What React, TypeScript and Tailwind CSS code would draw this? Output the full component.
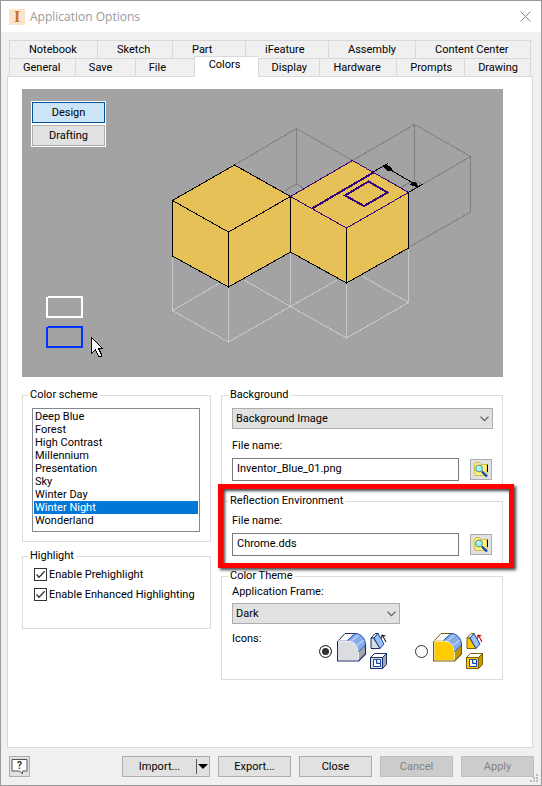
import { useState } from "react";
import type { ReactNode } from "react";

const schemes = [
  "Deep Blue",
  "Forest",
  "High Contrast",
  "Millennium",
  "Presentation",
  "Sky",
  "Winter Day",
  "Winter Night",
  "Wonderland",
];

const upperTabs = ["Notebook", "Sketch", "Part", "iFeature", "Assembly", "Content Center"];
const lowerTabs = ["General", "Save", "File", "Colors", "Display", "Hardware", "Prompts", "Drawing"];

const tabStyle = "min-w-0 border-t border-l border-[#d9d9d9] text-left whitespace-nowrap";

function Tabs() {
  return (
    <nav role="tablist" aria-label="Option pages" className="mx-2 mt-2 pr-0.5">
      <div className="grid h-[18px] grid-cols-[88fr_75fr_73fr_83fr_87fr_115fr] border-r border-[#d9d9d9]">
        {upperTabs.map((name) => (
          <button key={name} role="tab" aria-selected={false} className={`${tabStyle} pl-[19px]`}>
            {name}
          </button>
        ))}
      </div>
      <div className="grid h-[18px] grid-cols-[66fr_60fr_59fr_64fr_62fr_77fr_68fr_66fr] border-r border-[#d9d9d9]">
        {lowerTabs.map((name) =>
          name === "Colors" ? (
            <button
              key={name}
              role="tab"
              aria-selected={true}
              className={`${tabStyle} z-10 -mt-0.5 -mb-px bg-white pb-1 pl-3.5`}
            >
              {name}
            </button>
          ) : (
            <button key={name} role="tab" aria-selected={false} className={`${tabStyle} pl-[13px]`}>
              {name}
            </button>
          ),
        )}
      </div>
    </nav>
  );
}

function Scene() {
  return (
    <svg
      viewBox="22 89 481 288"
      preserveAspectRatio="xMinYMin meet"
      className="h-72 w-full"
      fill="none"
      shapeRendering="crispEdges"
      aria-hidden="true"
    >
      <g stroke="#7f7f7f">
        <path d="M234.5 165 296.5 128.5 352.5 160.5M296.5 128.5V184L285 190.5M296.5 184 304 188.5" />
        <path d="M352.5 160.5 414.5 124.5 470.5 156.5V212L408.5 247.5M414.5 124.5V180L400 188M414.5 180 421 184M470.5 156.5 408.5 192.5" />
      </g>
      <g stroke="#c8c8c8">
        <path d="M172.5 256V310.5L228.5 342 290.5 306.5 346.5 338 408.5 302.5V248" />
        <path d="M228.5 287V342M290.5 252V306M346.5 283V338M172.5 310.5 220 283M244 280 290.5 306.5 337 280M362 276 408.5 302.5" />
      </g>
      <path
        d="M172.5 200.5 234.5 165 290.5 196.5 352.5 160.5 408.5 192.5V248L346.5 283 290.5 252 228.5 287 172.5 256Z"
        fill="#e6c157"
      />
      <path
        stroke="#000"
        d="M290.5 196.5 234.5 165 172.5 200.5V256L228.5 287 290.5 252 346.5 283 408.5 248V192.5M172.5 200.5 228.5 232 290.5 196.5V252M228.5 232V287M346.5 228V283"
      />
      <path stroke="#330080" d="M290.5 196.5 352.5 160.5 408.5 192.5 346.5 228Z" />
      <path stroke="#330080" strokeWidth="2" d="M312 208.5 373.5 172.5M368.500 181.500 387.500 192.500 364 206 345 195.500Z" />
      <g stroke="#000">
        <path d="M373 172 388 163.500M409 192 423 184M383 165.500 418 186" />
        <path fill="#000" d="M384 166.500 387 165.500 391 168 391 170 387 170ZM418 186.500 416 183 413 182.500 411 184.500 415 186Z" />
      </g>
      <path stroke="#fff" strokeWidth="2" d="M48 297H82V317H47V297" />
      <path stroke="#0033ff" strokeWidth="2" d="M48 327H82V347H47V327" />
      <path
        d="M91.500 337.500V353.500L95.500 349.500 98.500 356.500H101.500V354.500L98.500 348.500H102.500Z"
        fill="#fff"
        stroke="#000"
      />
    </svg>
  );
}

function Group({ title, className, children }: { title: string; className: string; children: ReactNode }) {
  return (
    <fieldset className={`min-w-0 border border-[#dcdcdc] ${className}`}>
      <legend className="-ml-1 px-0.5 leading-[14px]">{title}</legend>
      {children}
    </fieldset>
  );
}

function Combo({ id, label, options, className }: { id: string; label?: string; options: string[]; className: string }) {
  return (
    <div className={`relative h-[21px] ${className}`}>
      <select
        id={id}
        aria-label={label}
        className="block h-full w-full appearance-none border border-[#adadad] bg-[#e1e1e1] pl-[3px]"
      >
        {options.map((o) => (
          <option key={o}>{o}</option>
        ))}
      </select>
      <svg
        viewBox="0 0 9 6"
        className="pointer-events-none absolute top-2 right-1 h-1.5 w-[9px]"
        fill="none"
        stroke="#555"
        strokeWidth="1.1"
        aria-hidden="true"
      >
        <path d="M.5.700 4.500 4.700 8.500.700" />
      </svg>
    </div>
  );
}

function FileField({ id, value, browseLabel }: { id: string; value: string; browseLabel: string }) {
  return (
    <>
      <label htmlFor={id} className="block leading-[14px]">
        File name:
      </label>
      <div className="mt-[5px] flex items-center gap-[11px]">
        <input
          id={id}
          type="text"
          defaultValue={value}
          className="h-[23px] min-w-0 flex-1 border border-[#7a7a7a] bg-white pb-0.5 pl-1"
        />
        <button
          aria-label={browseLabel}
          className="mr-px flex h-[21px] w-[22px] items-center justify-center border border-[#adadad] bg-[#e1e1e1]"
        >
          <svg viewBox="0 0 16 17" className="h-[17px] w-4" aria-hidden="true">
            <path d="M1 4 3 1.500H6.500L8 3.500H14V14.500H2Z" fill="#fff27a" stroke="#b5a500" strokeWidth=".6" />
            <path d="M14.500 3.500V11" fill="none" stroke="#000" />
            <circle cx="6" cy="7.500" r="3.400" fill="#8ff" stroke="#777" />
            <path d="M4.500 6.500 6 5.300" stroke="#fff" strokeWidth="1.200" />
            <path d="M9 10.500 14 15.500" stroke="#003a9e" strokeWidth="2.200" />
            <path d="M9.500 10 14.500 15" stroke="#3b8bff" strokeWidth=".8" />
          </svg>
        </button>
      </div>
    </>
  );
}

function Check({ label }: { label: string }) {
  return (
    <label className="flex h-5 items-start gap-0.5 leading-[14px] whitespace-nowrap">
      <span className="grid size-[13px] shrink-0">
        <input
          type="checkbox"
          defaultChecked
          className="peer col-start-1 row-start-1 size-[13px] appearance-none border border-[#333] bg-white"
        />
        <svg
          viewBox="0 0 13 13"
          className="pointer-events-none invisible col-start-1 row-start-1 size-[13px] peer-checked:visible"
          fill="none"
          stroke="#333"
          strokeWidth="1.300"
          aria-hidden="true"
        >
          <path d="M2.500 6.500 5 9.200 10.700 3.300" />
        </svg>
      </span>
      {label}
    </label>
  );
}

function ThemeIcons({ face, side, edge, arrow }: { face: string; side: string; edge: string; arrow: string }) {
  return (
    <svg viewBox="0 0 50 38" className="h-[38px] w-[50px]" strokeLinejoin="round" aria-hidden="true">
      <path d="M1 9 8 1.500H19L11 9Z" fill="#fff" stroke={edge} />
      <path d="M1 9H11C17 9 21.500 14 21.500 20V28.500H1Z" fill={face} stroke="#fff" />
      <path d="M21.500 20 28.500 13V21.500L21.500 28.500Z" fill={side} stroke="#fff" strokeWidth=".5" />
      <path d="M.5 9V29H21.500L28.500 22V13" fill="none" stroke={edge} strokeWidth="1.200" />
      <path d="M10.500 8.500 18 1.500C24 1.500 28.500 6.500 28.500 13L21.500 20C21.500 14 17 8.500 10.500 8.500Z" fill="#86acea" />
      <path d="M14.500 9 22 2.500M19.500 13.500 27 8" stroke="#b9d2f5" strokeWidth="1.500" />
      <path d="M10.500 8.500 18 1.500C24 1.500 28.500 6.500 28.500 13L21.500 20" fill="none" stroke="#1647a8" />
      <path d="M34 6 38 1.500H41L37 6Z" fill="#fff" stroke={edge} />
      <path d="M34 6H36.500L43 16.500H34Z" fill={face} stroke={edge} />
      <path d="M37 6 41 1.500 47 12 43 16.500Z" fill="#9dc0f2" stroke="#1647a8" />
      <path d="M49 10 45.500 3.500M44.500 6.500 45 3 48.500 4" fill="none" stroke={arrow} strokeWidth="1.100" />
      <path d="M33.500 25.500 37.500 21.500H49.500L45.500 25.500Z" fill="#fff" stroke={edge} />
      <path d="M45.500 25.500 49.500 21.500V32.500L45.500 36.500Z" fill={side} stroke={edge} />
      <path d="M33.500 25.500H45.500V36.500H33.500Z" fill={face} stroke={edge} />
      <path d="M36.500 27.500H43.500V34.500H36.500Z" fill="#fff" stroke="#1647a8" />
      <path d="M39.500 28V31.500H43" fill="#9dc0f2" stroke="#1647a8" />
    </svg>
  );
}

const radioStyle =
  "size-[13px] appearance-none rounded-full border border-[#333] bg-white shadow-[inset_0_0_0_2px_#fff] checked:bg-[#333]";
const buttonStyle = "h-[21px] w-[73px] border border-[#adadad] bg-[#e1e1e1]";
const disabledStyle = "h-[21px] w-[73px] border border-[#bfbfbf] bg-[#cccccc] text-[#838383]";

export default function App() {
  const [mode, setMode] = useState("Design");
  return (
    <main className="flex min-h-screen flex-col border border-[#9a9a9a] bg-[#f0f0f0] font-[Roboto,'Noto_Sans',sans-serif] text-[11px] leading-[14px] text-black">
      <header className="flex h-[31px] items-center bg-white pr-2 pl-2">
        <span
          aria-hidden="true"
          className="flex size-4 items-center justify-center bg-[#fde3cb] font-['Liberation_Serif',serif] text-base font-bold text-[#c8742a]"
        >
          I
        </span>
        <h1 className="ml-[5px] flex-1 font-['Open_Sans',sans-serif] text-xs text-[#999]">Application Options</h1>
        <button aria-label="Close window" className="size-4">
          <svg viewBox="0 0 16 16" className="size-4" stroke="#888" aria-hidden="true">
            <path d="M3.500 2.500 13.500 12.500M13.500 2.500 3.500 12.500" />
          </svg>
        </button>
      </header>

      <Tabs />

      <section className="mx-1.5 mr-2 flex-1 border border-[#d9d9d9] bg-white pt-3 pr-[29px] pb-4 pl-3.5">
        <div className="relative bg-[#a3a3a3]">
          <Scene />
          <div className="absolute top-3 left-[9px] flex w-[75px] flex-col gap-0.5 bg-white p-px">
            {["Design", "Drafting"].map((m) => (
              <button
                key={m}
                onClick={() => setMode(m)}
                aria-pressed={m === mode}
                className={
                  m === mode
                    ? "h-[21px] border border-[#005499] bg-[#cce4f7]"
                    : "h-[21px] border border-[#adadad] bg-[#e1e1e1]"
                }
              >
                {m}
              </button>
            ))}
          </div>
        </div>

        <div className="mt-[11px] flex gap-2.5">
          <div className="flex w-[189px] shrink-0 flex-col gap-[7px]">
            <Group title="Color scheme" className="px-[9px] pb-[9px]">
              <select
                size={9}
                aria-label="Color scheme"
                defaultValue="Winter Night"
                className="mt-1.5 block h-[124px] w-[168px] overflow-hidden border border-[#828790] bg-white p-px"
              >
                {schemes.map((s) => (
                  <option
                    key={s}
                    className="h-[13px] min-h-0 px-px py-0 leading-[13px] text-black checked:bg-[linear-gradient(#0078d7,#0078d7)] checked:text-white checked:[-webkit-text-fill-color:#fff]"
                  >
                    {s}
                  </option>
                ))}
              </select>
            </Group>
            <Group title="Highlight" className="h-20 px-[9px]">
              <div className="pt-[5px] pl-0.5">
                <Check label="Enable Prehighlight" />
                <Check label="Enable Enhanced Highlighting" />
              </div>
            </Group>
          </div>

          <div className="min-w-0 flex-1">
            <Group title="Background" className="pr-[9px] pb-1.5 pl-2.5">
              <Combo
                id="background"
                label="Background"
                options={["Background Image", "Gradient", "1 Color"]}
                className="mt-1.5 mb-2.5"
              />
              <FileField id="background-file" value="Inventor_Blue_01.png" browseLabel="Browse background file" />
            </Group>

            <div className="relative mt-1.5">
              <Group title="Reflection Environment" className="pr-[9px] pb-[9px] pl-2.5">
                <div className="pt-1.5">
                  <FileField id="reflection-file" value="Chrome.dds" browseLabel="Browse reflection file" />
                </div>
              </Group>
              <div className="pointer-events-none absolute -top-2.5 -right-[11px] -bottom-0.5 -left-[3px] border-[5px] border-[#f00] shadow-[2px_2px_3px_#444,inset_2px_2px_3px_#444]" />
            </div>

            <Group title="Color Theme" className="mt-[3px] px-2.5 pb-[9px]">
              <label htmlFor="frame" className="mt-0.5 mb-1 block leading-[14px]">
                Application Frame:
              </label>
              <Combo id="frame" options={["Dark", "Light"]} className="w-[168px]" />
              <div role="radiogroup" aria-labelledby="icons-label" className="mt-2 flex">
                <span id="icons-label" className="w-[87px] leading-[14px]">
                  Icons:
                </span>
                <label className="flex w-24 items-center gap-[5px]">
                  <input type="radio" name="icons" defaultChecked aria-label="Gray icons" className={radioStyle} />
                  <ThemeIcons face="#dcdde0" side="#a5a7ad" edge="#1a2f66" arrow="#222" />
                </label>
                <label className="flex items-center gap-[5px]">
                  <input type="radio" name="icons" aria-label="Yellow icons" className={radioStyle} />
                  <ThemeIcons face="#ffcc00" side="#c29a00" edge="#7a6000" arrow="#d00000" />
                </label>
              </div>
            </Group>
          </div>
        </div>
      </section>

      <footer className="relative flex h-[37px] items-start gap-2 pt-2 pr-[7px] pl-2">
        <button
          aria-label="Help"
          className="flex size-[21px] items-center justify-center border border-[#adadad] bg-[#e1e1e1]"
        >
          <svg viewBox="0 0 17 17" className="size-[17px]" aria-hidden="true">
            <path d="M1 1.500H16V13H11.500V16L8.500 13H1Z" fill="#fff" stroke="#4a5260" />
            <text x="8.500" y="11" textAnchor="middle" fontSize="10" fontWeight="bold" fill="#333">
              ?
            </text>
          </svg>
        </button>
        <div className="ml-auto flex h-[21px] w-[88px] border border-[#adadad] bg-[#e1e1e1]">
          <button className="flex-1">Import...</button>
          <button aria-label="Import options" className="my-0.5 flex w-[13px] items-center justify-center border-l border-[#555]">
            <svg viewBox="0 0 10 5" className="h-[5px] w-2.5" aria-hidden="true">
              <path d="M0 0H10L5 5Z" />
            </svg>
          </button>
        </div>
        <button className={buttonStyle}>Export...</button>
        <button className={buttonStyle}>Close</button>
        <button disabled className={disabledStyle}>
          Cancel
        </button>
        <button disabled className={disabledStyle}>
          Apply
        </button>
        <svg viewBox="0 0 9 9" className="absolute right-0.5 bottom-0.5 size-[9px]" fill="#bcbcbc" aria-hidden="true">
          <path d="M6 0H8V2H6ZM3 3H5V5H3ZM6 3H8V5H6ZM0 6H2V8H0ZM3 6H5V8H3ZM6 6H8V8H6Z" />
        </svg>
      </footer>
    </main>
  );
}
